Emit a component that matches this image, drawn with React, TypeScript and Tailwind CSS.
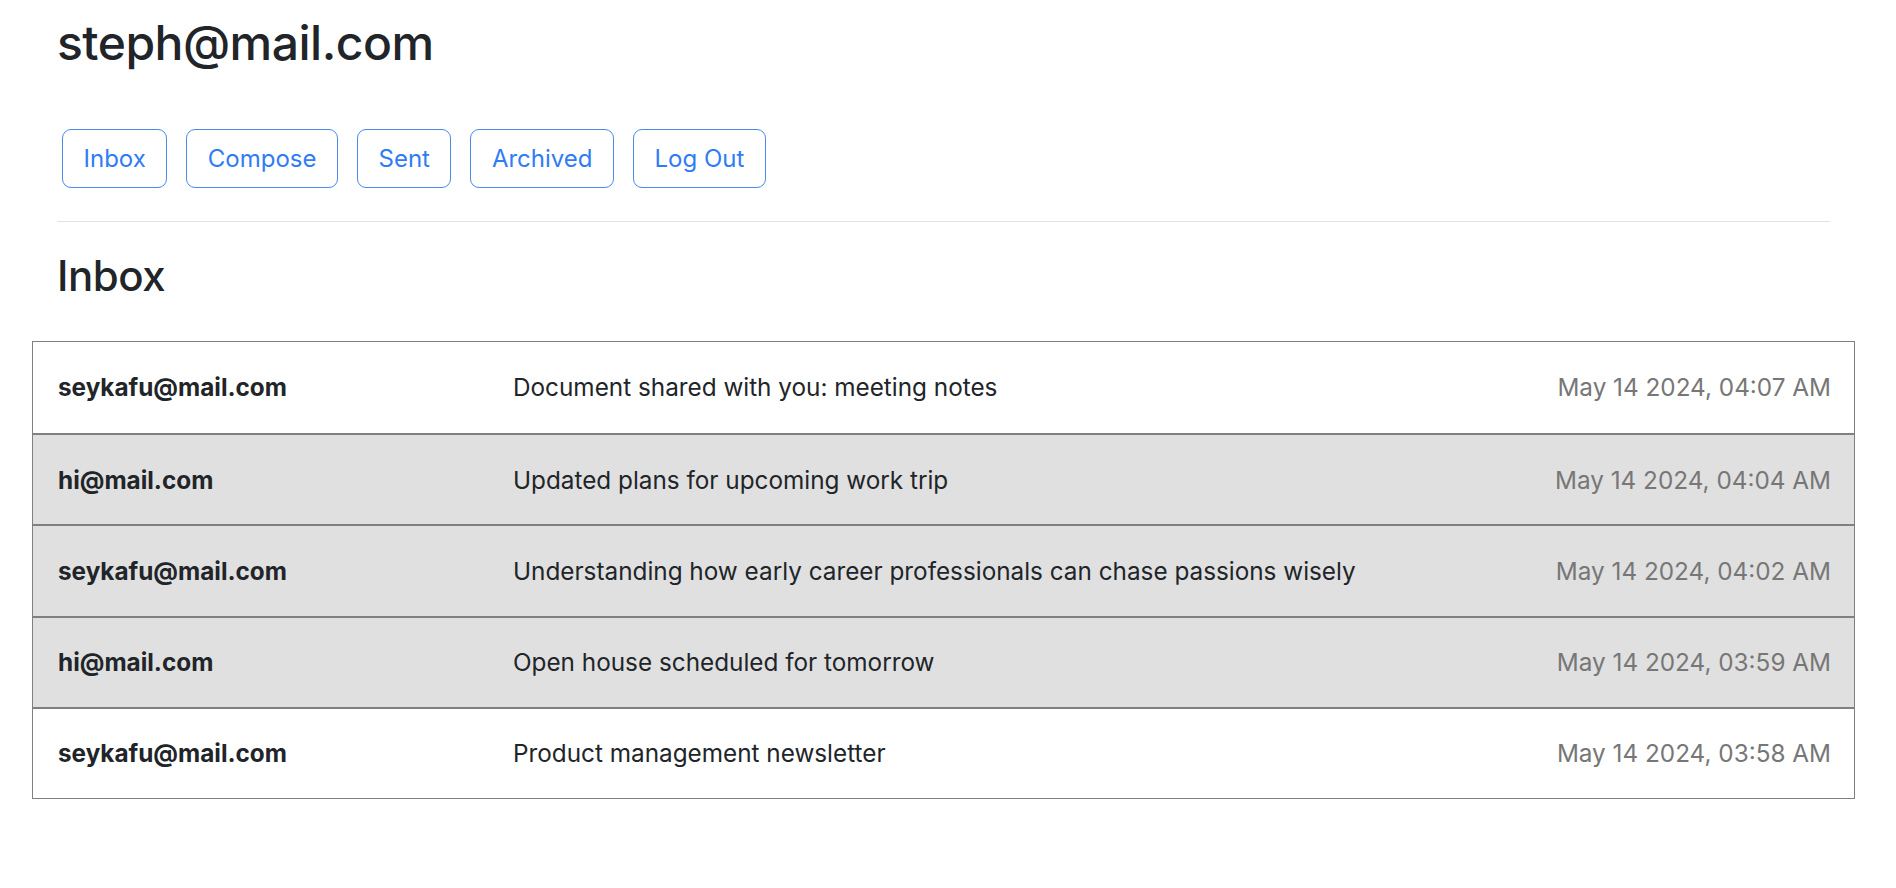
import React from 'react';

const tabs = ['Inbox', 'Compose', 'Sent', 'Archived', 'Log Out'];

const emails = [
    { from: 'seykafu@mail.com', subject: 'Document shared with you: meeting notes', date: 'May 14 2024, 04:07 AM', read: false },
    { from: 'hi@mail.com', subject: 'Updated plans for upcoming work trip', date: 'May 14 2024, 04:04 AM', read: true },
    { from: 'seykafu@mail.com', subject: 'Understanding how early career professionals can chase passions wisely', date: 'May 14 2024, 04:02 AM', read: true },
    { from: 'hi@mail.com', subject: 'Open house scheduled for tomorrow', date: 'May 14 2024, 03:59 AM', read: true },
    { from: 'seykafu@mail.com', subject: 'Product management newsletter', date: 'May 14 2024, 03:58 AM', read: false },
];

export default function App() {
    return (
        <div className="min-h-screen bg-white font-['Inter','Noto_Sans',sans-serif] text-[#212529]">
            <div className="pl-[57px] pr-[66px]">
                <h1 className="pt-[14px] text-[48px] leading-[58px] font-medium tracking-[-0.5px]">steph@mail.com</h1>

                {/* Nav buttons */}
                <div className="mt-[57px] ml-[5px] flex gap-[19px]">
                    {tabs.map((tab) => (
                        <button
                            key={tab}
                            className="h-[59px] px-[20.5px] rounded-[9px] border border-[#4a89ef] text-[#2f7cf5] text-[24px] leading-none bg-white"
                        >
                            {tab}
                        </button>
                    ))}
                </div>

                <hr className="mt-[33px] border-0 border-t border-[#e3e3e3]" />

                <h2 className="mt-[29px] text-[42px] leading-[50px] font-medium tracking-[-0.5px]">Inbox</h2>
            </div>

            {/* Email list */}
            <div className="mt-[40px] ml-[32px] mr-[41px] border border-[#808080]">
                {emails.map((email, i) => (
                    <div
                        key={i}
                        className={`h-[91.2px] flex items-center pl-[25px] pr-[23px] text-[24.3px] ${i > 0 ? 'border-t-2 border-[#808080]' : ''} ${email.read ? 'bg-[#e0e0e0]' : 'bg-white'}`}
                    >
                        <div className="w-[455px] shrink-0 font-bold">{email.from}</div>
                        <div className="flex-1 min-w-0 truncate">{email.subject}</div>
                        <div className="ml-auto text-[#777777]">{email.date}</div>
                    </div>
                ))}
            </div>
        </div>
    );
}
